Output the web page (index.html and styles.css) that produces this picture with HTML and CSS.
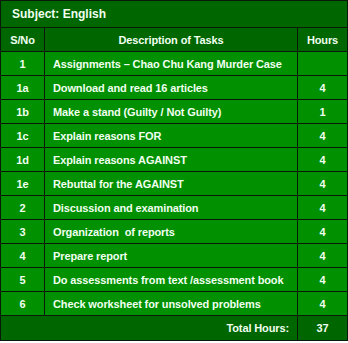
FILE: index.html
```html
<!DOCTYPE html>
<html>
<head>
<meta charset="utf-8">
<link rel="stylesheet" href="styles.css">
</head>
<body>
<table class="tasks">
  <colgroup>
    <col class="c-no">
    <col class="c-desc">
    <col class="c-hours">
  </colgroup>
  <tr class="title"><td colspan="3">Subject: English</td></tr>
  <tr class="head">
    <td class="num">S/No</td>
    <td class="center">Description of Tasks</td>
    <td class="num">Hours</td>
  </tr>
  <tr class="row"><td class="num">1</td><td class="desc">Assignments – Chao Chu Kang Murder Case</td><td class="num"></td></tr>
  <tr class="row"><td class="num">1a</td><td class="desc">Download and read 16 articles</td><td class="num">4</td></tr>
  <tr class="row"><td class="num">1b</td><td class="desc">Make a stand (Guilty / Not Guilty)</td><td class="num">1</td></tr>
  <tr class="row"><td class="num">1c</td><td class="desc">Explain reasons FOR</td><td class="num">4</td></tr>
  <tr class="row"><td class="num">1d</td><td class="desc">Explain reasons AGAINST</td><td class="num">4</td></tr>
  <tr class="row"><td class="num">1e</td><td class="desc">Rebuttal for the AGAINST</td><td class="num">4</td></tr>
  <tr class="row"><td class="num">2</td><td class="desc">Discussion and examination</td><td class="num">4</td></tr>
  <tr class="row"><td class="num">3</td><td class="desc">Organization&nbsp; of reports</td><td class="num">4</td></tr>
  <tr class="row"><td class="num">4</td><td class="desc">Prepare report</td><td class="num">4</td></tr>
  <tr class="row"><td class="num">5</td><td class="desc">Do assessments from text /assessment book</td><td class="num">4</td></tr>
  <tr class="row"><td class="num">6</td><td class="desc">Check worksheet for unsolved problems</td><td class="num">4</td></tr>
  <tr class="total"><td colspan="2" class="total-label">Total Hours:</td><td class="num">37</td></tr>
</table>
</body>
</html>
```

FILE: styles.css
```css
html, body {
  margin: 0;
  padding: 0;
  background: #ffffff;
}

.tasks {
  border-collapse: collapse;
  table-layout: fixed;
  width: 347px;
  font-family: "Liberation Sans", Arial, sans-serif;
  font-weight: bold;
  font-size: 11px;
  letter-spacing: -0.12px;
  color: #f0fff0;
}

.c-no { width: 44px; }
.c-desc { width: 253px; }
.c-hours { width: 50px; }

.tasks td {
  border: 1px solid #0a1a0a;
  padding: 0;
  height: 23px;
  white-space: nowrap;
}

.title td {
  background: #006600;
  height: 26px;
  font-size: 12px;
  letter-spacing: 0;
  padding-left: 11px;
}

.head td {
  background: #006600;
}

.row td {
  background: #009000;
}

.total td {
  background: #006600;
  height: 24px;
}

.num, .center {
  text-align: center;
}

.desc {
  padding-left: 8px !important;
}

.total-label {
  text-align: right;
  padding-right: 8px !important;
}
```
